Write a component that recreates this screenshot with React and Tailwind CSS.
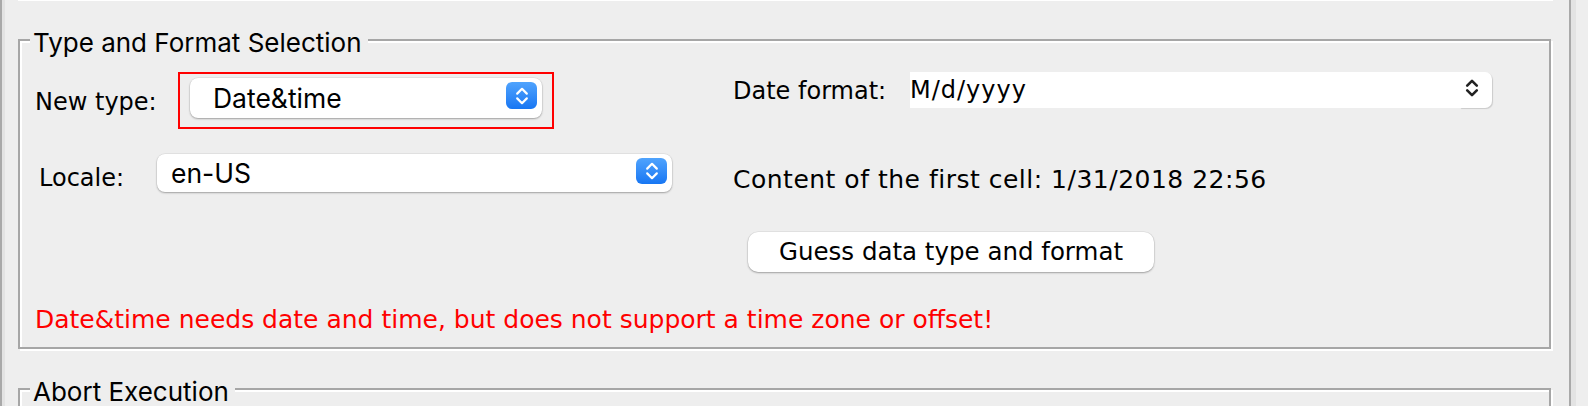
import React from "react";

// up/down chevrons used by the popup buttons
const Chevrons = ({ color, width = 2.4 }) => (
  <svg
    viewBox="0 0 14 20"
    className="w-[14px] h-[20px]"
    fill="none"
    stroke={color}
    strokeWidth={width}
    strokeLinecap="round"
    strokeLinejoin="round"
  >
    <path d="M2.2 7.6 7 2.8l4.8 4.8" />
    <path d="M2.2 12.4 7 17.2l4.8-4.8" />
  </svg>
);

const Group = ({ title, className, children }) => (
  <div
    className={`relative border-2 border-[#a6a6a6] shadow-[inset_2px_2px_0_#ffffff,2px_2px_0_#ffffff] ${className}`}
  >
    <span className="absolute left-[10px] top-[-12px] bg-[#eeeeee] pl-[3px] pr-[6px] font-['Inter',sans-serif] text-[26px] leading-[28px] whitespace-nowrap">
      {title}
    </span>
    {children}
  </div>
);

const PopupCombo = ({ value, width, height, textPad, btnH }) => (
  <div
    className={`flex items-center bg-white rounded-[8px] shadow-[0_1px_2px_rgba(0,0,0,0.3),0_0_0_0.5px_rgba(0,0,0,0.08)] ${width} ${height}`}
  >
    <span
      className={`flex-1 font-['Inter',sans-serif] text-[26.5px] leading-[28px] whitespace-nowrap ${textPad}`}
    >
      {value}
    </span>
    <div
      className={`self-start mt-[4px] mr-[5px] w-[31px] ${btnH} rounded-[6px] bg-linear-to-b from-[#4fa3fd] to-[#1676f3] flex items-center justify-center`}
    >
      <Chevrons color="#ffffff" width={2.2} />
    </div>
  </div>
);

const App = () => {
  return (
    <div className="h-[406px] overflow-hidden bg-[#eeeeee] flex font-['DejaVu_Sans',sans-serif] text-[24px] leading-[28px] text-black">
      <div className="w-[1571px] shrink-0 flex border-l-2 border-r-2 border-[#a9a9a9]">
        <div className="w-[3px] bg-[#e3e3e3]" />
        <div className="flex-1 pl-[13px]">
          <div className="h-px w-[1535px] bg-white" />

          <Group title="Type and Format Selection" className="mt-[38px] w-[1533px] h-[310px]">
            <div className="flex">
              {/* left column */}
              <div className="w-[713px] pt-[31px]">
                <div className="flex items-start">
                  <span className="ml-[15px] w-[143px] mt-[16px] whitespace-nowrap">New type:</span>
                  <div className="w-[376px] h-[57px] border-2 border-[#ff0000] pl-[10px] pt-[4px]">
                    <PopupCombo
                      value="Date&time"
                      width="w-[352px]"
                      height="h-[40px]"
                      textPad="pl-[23px]"
                      btnH="h-[27px]"
                    />
                  </div>
                </div>
                <div className="flex items-start mt-[25px]">
                  <span className="ml-[19px] w-[118px] mt-[10px] whitespace-nowrap">Locale:</span>
                  <PopupCombo
                    value="en-US"
                    width="w-[515px]"
                    height="h-[38px]"
                    textPad="pl-[14px]"
                    btnH="h-[26px]"
                  />
                </div>
              </div>

              {/* right column */}
              <div className="pt-[31px]">
                <div className="flex items-start h-[36px]">
                  <span className="w-[177px] mt-[5px] whitespace-nowrap">Date format:</span>
                  <div className="flex w-[582px] h-[36px]">
                    <div className="flex-1 bg-white flex items-center tracking-[1px] whitespace-nowrap">
                      M/d/yyyy
                    </div>
                    <div className="w-[32px] bg-white rounded-r-[7px] shadow-[1px_1px_1px_rgba(0,0,0,0.15)] pl-[5px] pt-[6px]">
                      <Chevrons color="#222222" width={2.6} />
                    </div>
                  </div>
                </div>
                <p className="mt-[58px] text-[25px] tracking-[0.5px] whitespace-nowrap">
                  Content of the first cell: 1/31/2018 22:56
                </p>
                <button className="mt-[38px] ml-[15px] w-[406px] h-[40px] bg-white rounded-[10px] shadow-[0_1px_2px_rgba(0,0,0,0.3),0_0_0_0.5px_rgba(0,0,0,0.08)] text-[24.5px] leading-[28px] whitespace-nowrap">
                  Guess data type and format
                </button>
              </div>
            </div>
            <p className="mt-[34px] ml-[15px] text-[25px] text-[#ff0000] whitespace-nowrap">
              Date&amp;time needs date and time, but does not support a time zone or offset!
            </p>
          </Group>

          <Group title="Abort Execution" className="mt-[39px] w-[1533px] h-[60px]" />
        </div>
      </div>
      <div className="w-[5px] bg-[#e3e3e3]" />
    </div>
  );
};

export default App;
